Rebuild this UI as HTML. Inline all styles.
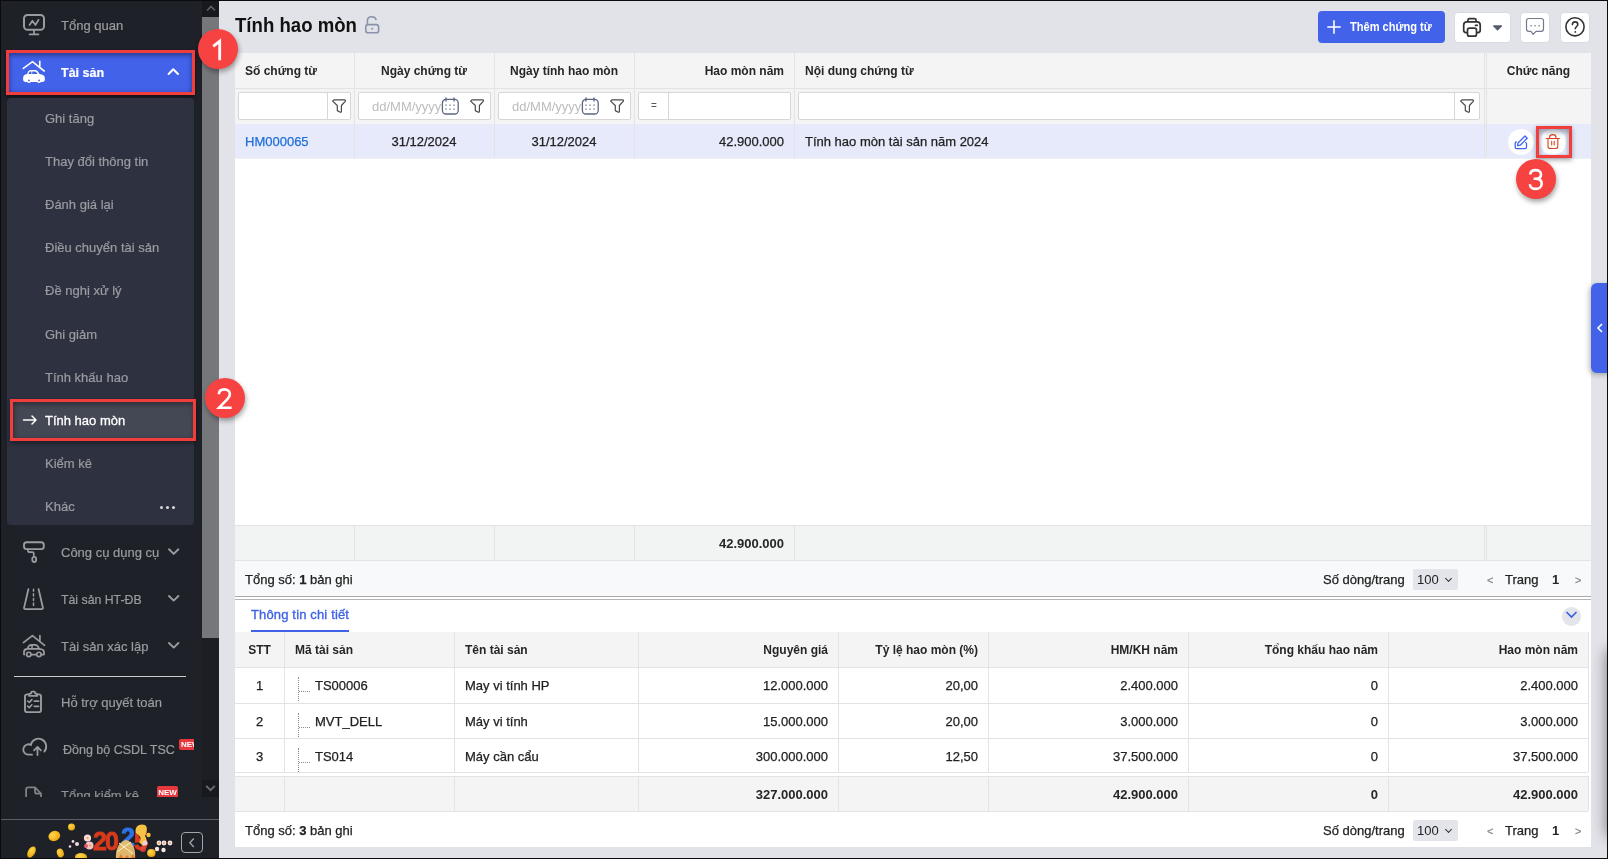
<!DOCTYPE html>
<html><head><meta charset="utf-8">
<style>
*{box-sizing:border-box;margin:0;padding:0}
html,body{width:1608px;height:859px;overflow:hidden;background:#0b0b0d;font-family:"Liberation Sans",sans-serif}
.abs{position:absolute}
#app{will-change:transform;position:absolute;left:0;top:0;width:1608px;height:859px;background:#e2e3e8;overflow:hidden}
/* sidebar */
#sb{position:absolute;left:0;top:0;width:219px;height:859px;background:#1e2128;overflow:hidden}
.sbi{position:absolute;left:60px;font-size:13px;color:#9a9ca1;white-space:nowrap;line-height:16px;-webkit-text-stroke:.2px currentColor}
.sub{position:absolute;left:45px;font-size:13px;color:#9a9ca1;white-space:nowrap;line-height:16px;-webkit-text-stroke:.2px currentColor}
/* main */
.t{position:absolute;white-space:nowrap;font-size:13px;color:#222;line-height:16px;-webkit-text-stroke:.25px currentColor}
.h{position:absolute;white-space:nowrap;font-size:12px;font-weight:bold;color:#262626;line-height:16px}
.vl{position:absolute;width:1px;background:#e3e3e3}
.hl{position:absolute;height:1px;background:#e3e3e3}
.badge{position:absolute;width:40px;height:40px;border-radius:50%;background:#f74242;box-shadow:1px 3px 5px rgba(0,0,0,.35)}
.redbox{position:absolute;border:3px solid #f23d3d;box-shadow:0 1px 4px rgba(0,0,0,.4)}
.fi{height:28px;background:#fff;border:1px solid #d6d6d6;border-radius:2px}
.fsep{position:absolute;top:0;width:1px;height:26px;background:#d6d6d6}
.sel{width:45px;height:21px;background:#e4e5ea;border-radius:2px}
.sel span{position:absolute;left:4px;top:3px;font-size:13px;line-height:16px;color:#222}
.sel:after{content:"";position:absolute;left:33px;top:7px;width:4px;height:4px;border-right:1.5px solid #333;border-bottom:1.5px solid #333;transform:rotate(45deg)}
.tree{position:absolute;width:12px;height:24px;border-left:1px dotted #8a8a8a}
.tree:after{content:"";position:absolute;left:0;top:14px;width:11px;border-bottom:1px dotted #8a8a8a}
.t[style*="bold"]{-webkit-text-stroke:0;color:#262626}
</style></head>
<body>
<div id="app">

<!-- SIDEBAR -->
<div id="sb">
  <svg class="abs" style="left:0;top:0" width="219" height="797" viewBox="0 0 219 797" fill="none" stroke="#9a9ca1" stroke-linecap="round" stroke-linejoin="round">
    <!-- tong quan monitor -->
    <rect x="24" y="15" width="20" height="14.8" rx="3.6" stroke-width="2"/>
    <path d="M29.6 25L32.4 20.7 35.4 25 38.6 19.8" stroke-width="1.7"/>
    <path d="M34 30.5V34.3M29.6 34.4H38.4" stroke-width="1.7"/>
    <!-- roller -->
    <rect x="24" y="542.2" width="19.8" height="6.9" rx="2.6" stroke-width="1.9"/>
    <path d="M27.9 549.3v.9c0 1.3.8 2 2.1 2h2.4c.9 0 1.4.5 1.4 1.4v2.2" stroke-width="1.7"/>
    <rect x="32.3" y="556.8" width="3.8" height="5.2" rx="1.9" stroke-width="1.8"/>
    <!-- road -->
    <path d="M28.4 589.2L24.1 607.6c-.2.9.3 1.5 1.2 1.5h16.4c.9 0 1.4-.6 1.2-1.5L38.6 589.2" stroke-width="1.8"/>
    <path d="M33.5 589.3v2M33.5 593.8v2.2M33.5 598.4v2.2M33.5 603v2.4" stroke-width="1.5"/>
    <!-- car outline (xac lap), origin 16,630 -->
    <g transform="translate(16 630)">
      <path d="M7.4 12.6L16.4 5.6 28.6 15.3M23.9 5.6V10.5" stroke-width="1.7"/>
      <path d="M8 24V22c0-2 1.3-3 3.4-3.1l.9-2c.7-1.4 1.5-2 3.3-2h3.2c1.7 0 2.6.5 3.4 2l1 2c3 .2 4.8 1.2 4.8 3.4V24" stroke-width="1.7"/>
      <path d="M11.6 18.9H23.2M16 15v3.9M10.6 24.6h0.1M15.2 24.6h5.2M25.4 24.6h2.6M8 24.6h.4" stroke-width="1.6"/>
      <circle cx="12.8" cy="24.4" r="2.2" stroke-width="1.6"/>
      <circle cx="22.9" cy="24.4" r="2.2" stroke-width="1.6"/>
    </g>
    <!-- clipboard -->
    <path d="M29.4 694.4h-2.2c-1.2 0-2.2 1-2.2 2.2v13.3c0 1.2 1 2.2 2.2 2.2h11.6c1.2 0 2.2-1 2.2-2.2v-13.3c0-1.2-1-2.2-2.2-2.2h-2.2" stroke-width="1.9"/>
    <path d="M29.1 695.9v-1.6c0-.5.4-.8.8-.8h1.3v-1.1c0-.5.4-.8.8-.8h2.3c.5 0 .8.4.8.8v1.1h1.3c.5 0 .8.4.8.8v1.6z" stroke-width="1.7"/>
    <path d="M27.6 701l1.7 1.4 2.6-2.8M27.6 706.2l1.7 1.4 2.6-2.8" stroke-width="1.6"/>
    <path d="M34.3 701.2h4.3M34.3 706.3h4.3" stroke-width="1.7"/>
    <!-- cloud -->
    <path d="M32 754.7H28.6A5.2 5.2 0 1 1 31.1 745" stroke-width="1.8"/>
    <path d="M30.9 744.4A7.8 7.8 0 1 1 44.3 751.6" stroke-width="1.8"/>
    <path d="M37.5 755V747.2M34.1 750.3L37.5 746.9 40.9 750.3" stroke-width="1.8"/>
    <!-- doc (tong kiem ke) -->
    <path d="M26.1 798V789.6c0-1.4.8-2.3 2.2-2.3H35L41 793.6V798M35 787.6v3.8c0 1.5.8 2.3 2.1 2.3H41" stroke="#7f8186" stroke-width="1.8"/>
    <!-- chevrons -->
    <path d="M169 549.3L173.7 553.9 178.4 549.3" stroke-width="1.9"/>
    <path d="M169 596L173.7 600.6 178.4 596" stroke-width="1.9"/>
    <path d="M169 643L173.7 647.6 178.4 643" stroke-width="1.9"/>
  </svg>
  <div class="sbi" style="top:18px;left:61px">Tổng quan</div>

  <!-- Tai san active -->
  <div class="abs" style="left:6px;top:50px;width:189px;height:45px;background:#f23d3d;box-shadow:0 2px 4px rgba(0,0,0,.5)"></div>
  <div class="abs" style="left:9px;top:53px;width:183px;height:39px;background:#4262ea;box-shadow:inset 0 3px 4px rgba(0,0,0,.28), inset 0 0 5px rgba(0,0,0,.22)"></div>
  <svg class="abs" style="left:16px;top:56px" width="36" height="30" viewBox="0 0 36 30">
    <path d="M7.3 12.4L16.5 5.7 28.2 15M23.8 5.4V10.6" fill="none" stroke="#fff" stroke-width="1.6" stroke-linecap="round"/>
    <path d="M7.1 22.2c0-2.6 1.4-3.9 4-4.2l.8-2c.7-1.5 1.6-2 3.6-2h3c2 0 3 .6 3.9 2.2l1 1.8c3.4.3 5.5 1.5 5.5 4.3v1.2c0 1.5-.9 2.4-2.4 2.4H9.5c-1.5 0-2.4-.9-2.4-2.4z" fill="#fff"/>
    <circle cx="13" cy="25" r="2.1" fill="#fff"/><circle cx="23" cy="25" r="2.1" fill="#fff"/>
    <path d="M12.3 18l.7-1.6c.4-.7.9-1 1.9-1h.6V18zM16.2 15.4h2c1.2 0 1.9.4 2.5 1.2l.7 1.4h-5.2z" fill="#4262ea"/>
    <circle cx="12.9" cy="24.4" r="0.9" fill="#4262ea"/><circle cx="23" cy="24.4" r="0.9" fill="#4262ea"/>
  </svg>
  <div class="sbi" style="top:65px;left:61px;color:#fff;font-weight:bold;font-size:12.5px">Tài sản</div>
  <svg class="abs" style="left:166px;top:66px" width="14" height="10" viewBox="0 0 14 10"><path d="M2.6 8L7.3 3.3 12 8" fill="none" stroke="#fff" stroke-width="2" stroke-linecap="round" stroke-linejoin="round"/></svg>

  <!-- submenu panel -->
  <div class="abs" style="left:7px;top:98px;width:187px;height:427px;background:#2e3140;border-radius:4px"></div>
  <div class="sub" style="top:111px">Ghi tăng</div>
  <div class="sub" style="top:154px">Thay đổi thông tin</div>
  <div class="sub" style="top:197px">Đánh giá lại</div>
  <div class="sub" style="top:240px">Điều chuyển tài sản</div>
  <div class="sub" style="top:283px">Đề nghị xử lý</div>
  <div class="sub" style="top:327px">Ghi giảm</div>
  <div class="sub" style="top:370px">Tính khấu hao</div>
  <!-- active sub -->
  <div class="abs" style="left:10px;top:399px;width:186px;height:42px;background:#f23d3d;box-shadow:0 2px 5px rgba(0,0,0,.45)"></div>
  <div class="abs" style="left:13px;top:402px;width:180px;height:36px;background:#444754;box-shadow:inset 0 3px 4px rgba(0,0,0,.25), inset 3px 0 4px rgba(0,0,0,.15)"></div>
  <svg class="abs" style="left:22px;top:414px" width="16" height="12" viewBox="0 0 16 12"><path d="M1.5 6h12.5M10 2l4 4-4 4" fill="none" stroke="#fff" stroke-width="1.5" stroke-linecap="round" stroke-linejoin="round"/></svg>
  <div class="sub" style="top:413px;color:#fff;-webkit-text-stroke:.3px #fff">Tính hao mòn</div>
  <div class="sub" style="top:456px">Kiểm kê</div>
  <div class="sub" style="top:499px">Khác</div>
  <div class="abs" style="left:160px;top:506px;width:3px;height:3px;border-radius:50%;background:#d8d9dc;box-shadow:6px 0 0 #d8d9dc,12px 0 0 #d8d9dc"></div>

  <div class="sbi" style="top:545px;left:61px">Công cụ dụng cụ</div>
  <div class="sbi" style="top:592px;left:61px;font-size:12.3px">Tài sản HT-ĐB</div>
  <div class="sbi" style="top:639px;left:61px">Tài sản xác lập</div>
  <div class="abs" style="left:14px;top:676px;width:172px;height:1px;background:#c9cacd"></div>
  <div class="sbi" style="top:695px;left:61px">Hỗ trợ quyết toán</div>
  <div class="sbi" style="top:742px;left:63px;font-size:12.5px">Đồng bộ CSDL TSC</div>
  <div class="abs" style="left:179px;top:739px;width:15px;height:11px;background:#e8383f;border-radius:2px 0 0 2px;overflow:hidden"><span style="position:absolute;left:2px;top:1px;font-size:8px;line-height:10px;color:#fff;font-weight:bold">NEW</span></div>

  <div class="abs" style="left:0;top:776px;width:202px;height:21px;overflow:hidden">
    <div class="sbi" style="top:12px;left:61px;color:#8f9196">Tổng kiểm kê</div>
    <div class="abs" style="left:157px;top:10px;width:21px;height:13px;background:#e8383f;border-radius:2px;font-size:8px;line-height:13px;color:#fff;font-weight:bold;text-align:center">NEW</div>
  </div>

  <!-- sidebar bottom -->
  <div class="abs" style="left:0;top:819px;width:219px;height:1px;background:#5b5e66"></div>
  <div class="abs" style="left:181px;top:832px;width:22px;height:21px;border:1.5px solid #a3a5ab;border-radius:4px"></div>
  <svg class="abs" style="left:187px;top:837px" width="10" height="12" viewBox="0 0 10 12"><path d="M6.8 1.5L2.8 5.8 6.8 10" fill="none" stroke="#a3a5ab" stroke-width="1.3"/></svg>
  <!-- 2025 logo approx -->
  <svg class="abs" style="left:0;top:820px" width="180" height="39" viewBox="0 820 180 39">
    <defs><radialGradient id="cg" cx=".4" cy=".35" r=".7"><stop offset="0" stop-color="#ffd84a"/><stop offset="1" stop-color="#e9a20c"/></radialGradient></defs>
    <ellipse cx="31.5" cy="852" rx="3.6" ry="6" transform="rotate(30 31.5 852)" fill="url(#cg)"/>
    <ellipse cx="54.3" cy="836" rx="6" ry="5" transform="rotate(-20 54.3 836)" fill="url(#cg)"/>
    <ellipse cx="71.5" cy="827" rx="3.5" ry="3.4" fill="url(#cg)"/>
    <ellipse cx="60.3" cy="853" rx="3.4" ry="4.4" transform="rotate(-20 60.3 853)" fill="url(#cg)"/>
    <ellipse cx="81" cy="857" rx="6" ry="4" fill="url(#cg)"/>
    <ellipse cx="151.3" cy="853" rx="4.2" ry="4" fill="url(#cg)"/>
    <path d="M77 833 L95 852" stroke="#5a1414" stroke-width="1" opacity=".6"/>
    <circle cx="73" cy="841.5" r="1.4" fill="#f3d7dd"/><circle cx="77" cy="844" r="2" fill="#f3d7dd"/><circle cx="70" cy="846.5" r="1.3" fill="#f3d7dd"/>
    <circle cx="87.5" cy="838" r="3.6" fill="#f6dce2"/><circle cx="89.5" cy="845.5" r="4" fill="#f1c4cf"/><circle cx="86" cy="846" r="2" fill="#e05b73"/>
    <circle cx="87.5" cy="838" r="1.2" fill="#f2b33a"/><circle cx="90" cy="845.5" r="1.2" fill="#f2b33a"/>
    <text x="93" y="850" font-family="Liberation Sans" font-weight="bold" font-size="25" fill="#d93a1c" stroke="#d93a1c" stroke-width=".8" letter-spacing="-2">20</text>
    <text x="121" y="846" font-family="Liberation Sans" font-weight="bold" font-size="25" fill="#2b72e6" stroke="#2b72e6" stroke-width=".8">2</text>
    <text x="134" y="850" font-family="Liberation Sans" font-weight="bold" font-size="25" fill="#d93a1c" stroke="#d93a1c" stroke-width=".8">5</text>
    <path d="M116 859 C115 850 119 841 126 840 C133 841 136 850 135 859z" fill="#f0c470" opacity=".92"/>
    <path d="M117 852 L131 842 M119 843 L133 854" stroke="#fff1c8" stroke-width="1"/>
    <path d="M136 833 C134 826 140 823 145 825 C148 827 147 832 145 836 C148 840 146 846 143 846 L139 842 C142 839 141 836 136 833z" fill="#f5c244"/>
    <circle cx="148.5" cy="835" r="2.2" fill="#f5c244"/>
    <circle cx="159" cy="843" r="2.4" fill="#f8e3e6"/><circle cx="164" cy="843" r="2.4" fill="#f8e3e6"/><circle cx="170" cy="843" r="2.4" fill="#f8e3e6"/><circle cx="157" cy="849" r="2.2" fill="#f8e3e6"/><circle cx="163.5" cy="850" r="2.2" fill="#f8e3e6"/>
    <circle cx="159" cy="843" r=".9" fill="#e7a64a"/><circle cx="164" cy="843" r=".9" fill="#e7a64a"/><circle cx="170" cy="843" r=".9" fill="#e7a64a"/>
    <circle cx="143" cy="849" r="3" fill="#e9453e" opacity=".8"/><circle cx="145" cy="843" r="2.5" fill="#f3d0d6"/>
    <path d="M118 859l3-5 3 5 3-4 3 4 3-5 3 5z" fill="#e36b2a" opacity=".8"/>
  </svg>
  <!-- sidebar scrollbar -->
  <div class="abs" style="left:202px;top:0;width:17px;height:797px;background:#1c1e24"></div>
  <div class="abs" style="left:202px;top:0;width:17px;height:17px;background:#18191e"></div>
  <svg class="abs" style="left:206px;top:4px" width="10" height="8" viewBox="0 0 10 8"><path d="M1 6.5L5 2.5l4 4" fill="none" stroke="#5f6166" stroke-width="1.6"/></svg>
  <div class="abs" style="left:202px;top:17px;width:17px;height:621px;background:#76777b"></div>
  <div class="abs" style="left:202px;top:780px;width:17px;height:17px;background:#18191e"></div>
  <svg class="abs" style="left:205px;top:784px" width="11" height="9" viewBox="0 0 11 9"><path d="M1.2 1.8L5.5 6.2 9.8 1.8" fill="none" stroke="#6b6d72" stroke-width="1.8"/></svg>
</div>

<!-- MAIN -->
<div class="abs" style="left:235px;top:13px;font-size:20px;font-weight:bold;color:#111;line-height:24px;white-space:nowrap;transform:scaleX(.93);transform-origin:0 0">Tính hao mòn</div>
<svg class="abs" style="left:362px;top:14px" width="20" height="22" viewBox="362 14 20 22" fill="none" stroke="#8a93ab" stroke-width="1.6">
  <rect x="365.8" y="24.6" width="12.8" height="8.2" rx="2.4"/>
  <path d="M367.4 24.4v-3.6c0-2.6 2-4.1 4.4-4.1 2.3 0 4 1.3 4.3 3.5"/>
  <circle cx="372.2" cy="28.7" r="1" fill="#8a93ab" stroke="none"/>
</svg>

<!-- top buttons -->
<div class="abs" style="left:1318px;top:11px;width:127px;height:32px;background:#4262ea;border-radius:4px"></div>
<svg class="abs" style="left:1327px;top:20px" width="14" height="14" viewBox="0 0 14 14"><path d="M7 0.3v13.4M0.3 7h13.4" stroke="#fff" stroke-width="1.6"/></svg>
<div class="abs" style="left:1350px;top:19px;font-size:12.5px;font-weight:bold;color:#fff;line-height:16px;white-space:nowrap;transform:scaleX(.885);transform-origin:0 0">Thêm chứng từ</div>

<div class="abs" style="left:1454px;top:12px;width:57px;height:31px;background:#fff;border:1px solid #d9dbe3;border-radius:4px"></div>
<svg class="abs" style="left:1460px;top:15px" width="24" height="24" viewBox="1460 15 24 24" fill="none" stroke="#333" stroke-width="1.7" stroke-linejoin="round">
  <path d="M1467.9 21.8v-1.6c0-1 .8-1.6 1.6-1.6h5c.9 0 1.6.6 1.6 1.6v1.6"/>
  <path d="M1467.2 32.6h-1.2c-1.4 0-2.3-.9-2.3-2.3v-5.2c0-2 1.3-3.3 3.3-3.3h9.9c2 0 3.3 1.3 3.3 3.3v5.2c0 1.4-.9 2.3-2.3 2.3h-1.2"/>
  <rect x="1467.5" y="28.2" width="9" height="8" rx="2"/>
  <path d="M1475.5 25.3h1.8" stroke-linecap="round"/>
</svg>
<svg class="abs" style="left:1493px;top:25px" width="10" height="6" viewBox="0 0 10 6"><path d="M0.7 0.3h7.8c.5 0 .8.5.5.9L5.1 5.2c-.3.3-.8.3-1.1 0L.2 1.2c-.3-.4 0-.9.5-.9z" fill="#555b6e"/></svg>

<div class="abs" style="left:1520px;top:12px;width:30px;height:31px;background:#fff;border:1px solid #d9dbe3;border-radius:4px"></div>
<svg class="abs" style="left:1524px;top:15px" width="22" height="22" viewBox="1524 15 22 22" fill="none" stroke="#737a8e" stroke-width="1.2" stroke-linejoin="round">
  <path d="M1528.8 18.5h12.4c1.4 0 2.3.9 2.3 2.3v8.2c0 1.4-.9 2.3-2.3 2.3h-5.2l-2.8 3-2.3-3h-2.1c-1.4 0-2.3-.9-2.3-2.3v-8.2c0-1.4.9-2.3 2.3-2.3z"/>
  <path d="M1531 25.7h.2M1535 25.7h.2M1539 25.7h.2" stroke-width="1.4" stroke-linecap="round"/>
</svg>

<div class="abs" style="left:1560px;top:12px;width:30px;height:31px;background:#fff;border:1px solid #d9dbe3;border-radius:4px"></div>
<svg class="abs" style="left:1563px;top:15px" width="24" height="24" viewBox="1563 15 24 24" fill="none" stroke="#333" stroke-width="1.6">
  <circle cx="1575" cy="26.8" r="9.1"/>
  <path d="M1572.4 24.6c0-1.6 1.2-2.7 2.7-2.7s2.7 1.1 2.7 2.6c0 1.9-2.5 2.2-2.5 4.3" stroke-linecap="round"/>
  <circle cx="1575.3" cy="31.9" r=".9" fill="#333" stroke="none"/>
</svg>

<!-- ===== upper grid panel ===== -->
<div class="abs" style="left:235px;top:53px;width:1356px;height:548px;background:#fff"></div>
<!-- header + filter rows bg -->
<div class="abs" style="left:235px;top:53px;width:1356px;height:71px;background:#f4f4f4"></div>
<div class="hl" style="left:235px;top:88px;width:1356px"></div>
<!-- selected row -->
<div class="abs" style="left:235px;top:124px;width:1356px;height:34px;background:#e7eafb"></div>
<div class="hl" style="left:235px;top:158px;width:1356px;background:#eef0f6"></div>
<!-- column lines -->
<div class="vl" style="left:354px;top:53px;height:105px"></div>
<div class="vl" style="left:494px;top:53px;height:105px"></div>
<div class="vl" style="left:634px;top:53px;height:105px"></div>
<div class="vl" style="left:794px;top:53px;height:105px"></div>
<div class="vl" style="left:1484px;top:53px;height:105px"></div>
<div class="vl" style="left:1486px;top:53px;height:105px"></div>
<!-- header text -->
<div class="h" style="left:245px;top:63px">Số chứng từ</div>
<div class="h" style="left:354px;top:63px;width:140px;text-align:center">Ngày chứng từ</div>
<div class="h" style="left:494px;top:63px;width:140px;text-align:center">Ngày tính hao mòn</div>
<div class="h" style="left:634px;top:63px;width:150px;text-align:right">Hao mòn năm</div>
<div class="h" style="left:805px;top:63px">Nội dung chứng từ</div>
<div class="h" style="left:1486px;top:63px;width:105px;text-align:center">Chức năng</div>
<!-- filter inputs -->
<div class="abs fi" style="left:238px;top:92px;width:113px"><div class="fsep" style="left:88px"></div></div>
<svg class="abs" style="left:332px;top:99px" width="15" height="15" viewBox="0 0 15 15"><path d="M0.6 2.1L1.9 0.9H12.6C13.4 0.9 13.7 1.6 13.2 2.3L9.4 6.5V13L8.4 13.3 5.3 11.6V6.5Z" fill="none" stroke="#4a4a4a" stroke-width="1.2" stroke-linejoin="round"/></svg>
<div class="abs fi" style="left:358px;top:92px;width:133px"></div>
<div class="abs" style="left:372px;top:99px;font-size:13px;color:#bdbdbd;line-height:16px;white-space:nowrap">dd/MM/yyyy</div>
<svg class="abs" style="left:440px;top:96px" width="20" height="20" viewBox="0 0 20 20" fill="none" stroke="#5b6580" stroke-width="1.3"><rect x="2.4" y="3.4" width="15.8" height="14.6" rx="3.5"/><path d="M6 1.8v3.2M14 1.8v3.2" stroke-linecap="round"/><path d="M5.4 9.2h1.2M9.4 9.2h1.2M13.4 9.2h1.2M5.4 13.2h1.2M9.4 13.2h1.2M13.4 13.2h1.2" stroke-width="1.2"/></svg>
<svg class="abs" style="left:470px;top:99px" width="15" height="15" viewBox="0 0 15 15"><path d="M0.6 2.1L1.9 0.9H12.6C13.4 0.9 13.7 1.6 13.2 2.3L9.4 6.5V13L8.4 13.3 5.3 11.6V6.5Z" fill="none" stroke="#4a4a4a" stroke-width="1.2" stroke-linejoin="round"/></svg>
<div class="abs fi" style="left:498px;top:92px;width:133px"></div>
<div class="abs" style="left:512px;top:99px;font-size:13px;color:#bdbdbd;line-height:16px;white-space:nowrap">dd/MM/yyyy</div>
<svg class="abs" style="left:580px;top:96px" width="20" height="20" viewBox="0 0 20 20" fill="none" stroke="#5b6580" stroke-width="1.3"><rect x="2.4" y="3.4" width="15.8" height="14.6" rx="3.5"/><path d="M6 1.8v3.2M14 1.8v3.2" stroke-linecap="round"/><path d="M5.4 9.2h1.2M9.4 9.2h1.2M13.4 9.2h1.2M5.4 13.2h1.2M9.4 13.2h1.2M13.4 13.2h1.2" stroke-width="1.2"/></svg>
<svg class="abs" style="left:610px;top:99px" width="15" height="15" viewBox="0 0 15 15"><path d="M0.6 2.1L1.9 0.9H12.6C13.4 0.9 13.7 1.6 13.2 2.3L9.4 6.5V13L8.4 13.3 5.3 11.6V6.5Z" fill="none" stroke="#4a4a4a" stroke-width="1.2" stroke-linejoin="round"/></svg>
<div class="abs fi" style="left:638px;top:92px;width:153px"><div class="fsep" style="left:29px"></div></div>
<div class="abs" style="left:651px;top:98px;font-size:10px;color:#555;line-height:16px">=</div>
<div class="abs fi" style="left:798px;top:92px;width:682px"><div class="fsep" style="left:655px"></div></div>
<svg class="abs" style="left:1460px;top:99px" width="15" height="15" viewBox="0 0 15 15"><path d="M0.6 2.1L1.9 0.9H12.6C13.4 0.9 13.7 1.6 13.2 2.3L9.4 6.5V13L8.4 13.3 5.3 11.6V6.5Z" fill="none" stroke="#4a4a4a" stroke-width="1.2" stroke-linejoin="round"/></svg>
<!-- data row -->
<div class="t" style="left:245px;top:134px;color:#1f6fd8">HM000065</div>
<div class="t" style="left:354px;top:134px;width:140px;text-align:center">31/12/2024</div>
<div class="t" style="left:494px;top:134px;width:140px;text-align:center">31/12/2024</div>
<div class="t" style="left:634px;top:134px;width:150px;text-align:right">42.900.000</div>
<div class="t" style="left:805px;top:134px">Tính hao mòn tài sản năm 2024</div>
<!-- action buttons -->
<div class="abs" style="left:1508px;top:129px;width:26px;height:26px;border-radius:50%;background:#fff"></div>
<svg class="abs" style="left:1510px;top:132px" width="22" height="20" viewBox="1510 132 22 20" fill="none" stroke="#3f64f0" stroke-width="1.3" stroke-linejoin="round" stroke-linecap="round">
  <path d="M516.3 141.9c-.7.1-1.1.6-1.1 1.3v4.1c0 .8.6 1.4 1.4 1.4h8.5c.8 0 1.4-.6 1.4-1.4v-3.6c0-.6-.3-1-.8-1.2" transform="translate(1000 0)"/>
  <path d="M1517.6 145.6l.4-2.6 7-7 2.2 2.2-7 7z"/>
</svg>
<div class="abs" style="left:1540px;top:129px;width:26px;height:26px;border-radius:50%;background:#fff"></div>
<svg class="abs" style="left:1544px;top:132px" width="18" height="19" viewBox="1544 132 18 19" fill="none" stroke="#d9441f" stroke-width="1.1" stroke-linecap="round" stroke-linejoin="round">
  <path d="M1546.2 138.5h13.3"/>
  <path d="M1549.6 138.2v-1c0-1.5 1.3-2.6 3.2-2.6s3.2 1.1 3.2 2.6v1"/>
  <path d="M1548 138.8v7.4c0 1.4.9 2.3 2.3 2.3h5.2c1.4 0 2.3-.9 2.3-2.3v-7.4"/>
  <path d="M1551.7 141.3v3.6M1554.2 141.3v3.6"/>
</svg>
<!-- summary row -->
<div class="abs" style="left:235px;top:525px;width:1356px;height:35px;background:#f2f3f3"></div>
<div class="hl" style="left:235px;top:525px;width:1356px"></div>
<div class="hl" style="left:235px;top:560px;width:1356px"></div>
<div class="vl" style="left:354px;top:525px;height:35px"></div>
<div class="vl" style="left:494px;top:525px;height:35px"></div>
<div class="vl" style="left:634px;top:525px;height:35px"></div>
<div class="vl" style="left:794px;top:525px;height:35px"></div>
<div class="vl" style="left:1484px;top:525px;height:35px"></div>
<div class="vl" style="left:1486px;top:525px;height:35px"></div>
<div class="t" style="left:634px;top:536px;width:150px;text-align:right;font-weight:bold">42.900.000</div>
<!-- footer -->
<div class="abs" style="left:235px;top:561px;width:1356px;height:35px;background:#f8f9fb"></div>
<div class="t" style="left:245px;top:572px">Tổng số: <b>1</b> bản ghi</div>
<div class="t" style="left:1323px;top:572px">Số dòng/trang</div>
<div class="abs sel" style="left:1413px;top:569px"><span>100</span></div>
<div class="t" style="left:1487px;top:572px;color:#8a8a8a;font-size:11px">&lt;</div>
<div class="t" style="left:1505px;top:572px">Trang</div>
<div class="t" style="left:1552px;top:572px;font-weight:bold">1</div>
<div class="t" style="left:1575px;top:572px;color:#8a8a8a;font-size:11px">&gt;</div>
<!-- section divider -->
<div class="abs" style="left:235px;top:596px;width:1356px;height:1px;background:#a9a9a9"></div>
<div class="abs" style="left:235px;top:599px;width:1356px;height:1px;background:#b4b4b4"></div>

<!-- ===== detail panel ===== -->
<div class="abs" style="left:235px;top:600px;width:1356px;height:247px;background:#fff"></div>
<div class="abs" style="left:251px;top:607px;font-size:13px;color:#3f63e6;line-height:16px;white-space:nowrap;-webkit-text-stroke:.35px #3f63e6;letter-spacing:.15px">Thông tin chi tiết</div>
<div class="abs" style="left:251px;top:630px;width:98px;height:2px;background:#3f63e6"></div>
<div class="abs" style="left:1562px;top:607px;width:19px;height:19px;border-radius:50%;background:#e4e5ea"></div>
<svg class="abs" style="left:1565px;top:610px" width="13" height="9" viewBox="0 0 13 9"><path d="M1.5 2l5 5 5-5" fill="none" stroke="#3a5ee6" stroke-width="1.7"/></svg>

<!-- detail header -->
<div class="abs" style="left:235px;top:632px;width:1353px;height:35px;background:#f4f4f4"></div>
<div class="hl" style="left:235px;top:667px;width:1353px"></div>
<div class="hl" style="left:235px;top:703px;width:1353px"></div>
<div class="hl" style="left:235px;top:738px;width:1353px"></div>
<div class="hl" style="left:235px;top:772px;width:1353px"></div>
<div class="abs" style="left:235px;top:776px;width:1353px;height:35px;background:#f4f4f4"></div>
<div class="hl" style="left:235px;top:776px;width:1353px"></div>
<div class="hl" style="left:235px;top:811px;width:1353px"></div>
<div class="vl" style="left:284px;top:632px;height:140px"></div><div class="vl" style="left:284px;top:776px;height:35px"></div>
<div class="vl" style="left:454px;top:632px;height:140px"></div><div class="vl" style="left:454px;top:776px;height:35px"></div>
<div class="vl" style="left:638px;top:632px;height:140px"></div><div class="vl" style="left:638px;top:776px;height:35px"></div>
<div class="vl" style="left:838px;top:632px;height:140px"></div><div class="vl" style="left:838px;top:776px;height:35px"></div>
<div class="vl" style="left:988px;top:632px;height:140px"></div><div class="vl" style="left:988px;top:776px;height:35px"></div>
<div class="vl" style="left:1188px;top:632px;height:140px"></div><div class="vl" style="left:1188px;top:776px;height:35px"></div>
<div class="vl" style="left:1388px;top:632px;height:140px"></div><div class="vl" style="left:1388px;top:776px;height:35px"></div>
<div class="vl" style="left:1588px;top:632px;height:140px"></div><div class="vl" style="left:1588px;top:776px;height:35px"></div>

<div class="h" style="left:235px;top:642px;width:49px;text-align:center">STT</div>
<div class="h" style="left:295px;top:642px">Mã tài sản</div>
<div class="h" style="left:465px;top:642px">Tên tài sản</div>
<div class="h" style="left:638px;top:642px;width:190px;text-align:right">Nguyên giá</div>
<div class="h" style="left:838px;top:642px;width:140px;text-align:right">Tỷ lệ hao mòn (%)</div>
<div class="h" style="left:988px;top:642px;width:190px;text-align:right">HM/KH năm</div>
<div class="h" style="left:1188px;top:642px;width:190px;text-align:right">Tổng khấu hao năm</div>
<div class="h" style="left:1388px;top:642px;width:190px;text-align:right">Hao mòn năm</div>

<!-- rows -->
<div class="t" style="left:235px;top:678px;width:49px;text-align:center">1</div>
<div class="tree" style="left:298px;top:677px"></div>
<div class="t" style="left:315px;top:678px">TS00006</div>
<div class="t" style="left:465px;top:678px">May vi tính HP</div>
<div class="t" style="left:638px;top:678px;width:190px;text-align:right">12.000.000</div>
<div class="t" style="left:838px;top:678px;width:140px;text-align:right">20,00</div>
<div class="t" style="left:988px;top:678px;width:190px;text-align:right">2.400.000</div>
<div class="t" style="left:1188px;top:678px;width:190px;text-align:right">0</div>
<div class="t" style="left:1388px;top:678px;width:190px;text-align:right">2.400.000</div>

<div class="t" style="left:235px;top:714px;width:49px;text-align:center">2</div>
<div class="tree" style="left:298px;top:713px"></div>
<div class="t" style="left:315px;top:714px">MVT_DELL</div>
<div class="t" style="left:465px;top:714px">Máy vi tính</div>
<div class="t" style="left:638px;top:714px;width:190px;text-align:right">15.000.000</div>
<div class="t" style="left:838px;top:714px;width:140px;text-align:right">20,00</div>
<div class="t" style="left:988px;top:714px;width:190px;text-align:right">3.000.000</div>
<div class="t" style="left:1188px;top:714px;width:190px;text-align:right">0</div>
<div class="t" style="left:1388px;top:714px;width:190px;text-align:right">3.000.000</div>

<div class="t" style="left:235px;top:749px;width:49px;text-align:center">3</div>
<div class="tree" style="left:298px;top:748px"></div>
<div class="t" style="left:315px;top:749px">TS014</div>
<div class="t" style="left:465px;top:749px">Máy cần cẩu</div>
<div class="t" style="left:638px;top:749px;width:190px;text-align:right">300.000.000</div>
<div class="t" style="left:838px;top:749px;width:140px;text-align:right">12,50</div>
<div class="t" style="left:988px;top:749px;width:190px;text-align:right">37.500.000</div>
<div class="t" style="left:1188px;top:749px;width:190px;text-align:right">0</div>
<div class="t" style="left:1388px;top:749px;width:190px;text-align:right">37.500.000</div>

<div class="t" style="left:638px;top:787px;width:190px;text-align:right;font-weight:bold">327.000.000</div>
<div class="t" style="left:988px;top:787px;width:190px;text-align:right;font-weight:bold">42.900.000</div>
<div class="t" style="left:1188px;top:787px;width:190px;text-align:right;font-weight:bold">0</div>
<div class="t" style="left:1388px;top:787px;width:190px;text-align:right;font-weight:bold">42.900.000</div>

<!-- detail footer -->
<div class="t" style="left:245px;top:823px">Tổng số: <b>3</b> bản ghi</div>
<div class="t" style="left:1323px;top:823px">Số dòng/trang</div>
<div class="abs sel" style="left:1413px;top:820px"><span>100</span></div>
<div class="t" style="left:1487px;top:823px;color:#8a8a8a;font-size:11px">&lt;</div>
<div class="t" style="left:1505px;top:823px">Trang</div>
<div class="t" style="left:1552px;top:823px;font-weight:bold">1</div>
<div class="t" style="left:1575px;top:823px;color:#8a8a8a;font-size:11px">&gt;</div>

<!-- right side tab -->
<div class="abs" style="left:1591px;top:283px;width:20px;height:90px;background:#4262ea;border-radius:6px 0 0 6px;box-shadow:-2px 2px 5px rgba(0,0,0,.25)"></div>
<svg class="abs" style="left:1596px;top:323px" width="8" height="10" viewBox="0 0 8 10"><path d="M6 1L2 5l4 4" fill="none" stroke="#fff" stroke-width="1.6"/></svg>

<div class="abs" style="left:1610px;top:652px;width:10px;height:182px;border-radius:5px;box-shadow:0 0 14px 4px rgba(0,0,0,.42)"></div>
<!-- annotation badges -->
<div class="badge" style="left:198px;top:29px"></div>
<svg class="abs" style="left:198px;top:29px" width="40" height="40" viewBox="198 29 40 40" fill="none" stroke="#fff" stroke-width="2.8"><path d="M213.2 46.4L219.7 41.2V60.2" stroke-linejoin="miter"/></svg>
<div class="badge" style="left:205px;top:378px"></div>
<svg class="abs" style="left:205px;top:378px" width="40" height="40" viewBox="205 378 40 40" fill="none" stroke="#fff" stroke-width="2.6"><path d="M218.9 394.3C218.9 390.8 221.4 389.4 224.4 389.4 227.6 389.4 229.9 391.3 229.9 394.2 229.9 396.3 228.7 397.8 227 399.6L219.1 407.7H231.6" stroke-linejoin="miter"/></svg>
<div class="redbox" style="left:1536px;top:126px;width:36px;height:32px;box-shadow:0 2px 5px rgba(0,0,0,.35), inset 0 4px 4px rgba(60,64,84,.35), inset 3px 0 3px rgba(60,64,84,.12), inset -3px 0 3px rgba(60,64,84,.12)"></div>
<div class="badge" style="left:1516px;top:159px"></div>
<svg class="abs" style="left:1516px;top:159px" width="40" height="40" viewBox="1516 159 40 40" fill="none" stroke="#fff" stroke-width="2.6"><path d="M1530.3 174.6C1530.3 171.6 1532.7 170.1 1535.6 170.1 1538.7 170.1 1541 171.8 1541 174.5 1541 177.2 1538.8 178.8 1535.8 178.8H1533.6M1535.8 178.8C1539.2 178.8 1541.7 180.5 1541.7 183.7 1541.7 186.9 1539 188.9 1535.7 188.9 1532.5 188.9 1530 187.1 1529.9 184.2"/></svg>

<!-- frame border -->
<div class="abs" style="left:0;top:0;width:1608px;height:1px;background:#0b0b0d"></div>
<div class="abs" style="left:0;top:858px;width:1608px;height:1px;background:#0b0b0d"></div>
<div class="abs" style="left:0;top:0;width:1px;height:859px;background:#0b0b0d"></div>
<div class="abs" style="left:1607px;top:0;width:1px;height:859px;background:#0b0b0d"></div>

</div>
</body></html>
